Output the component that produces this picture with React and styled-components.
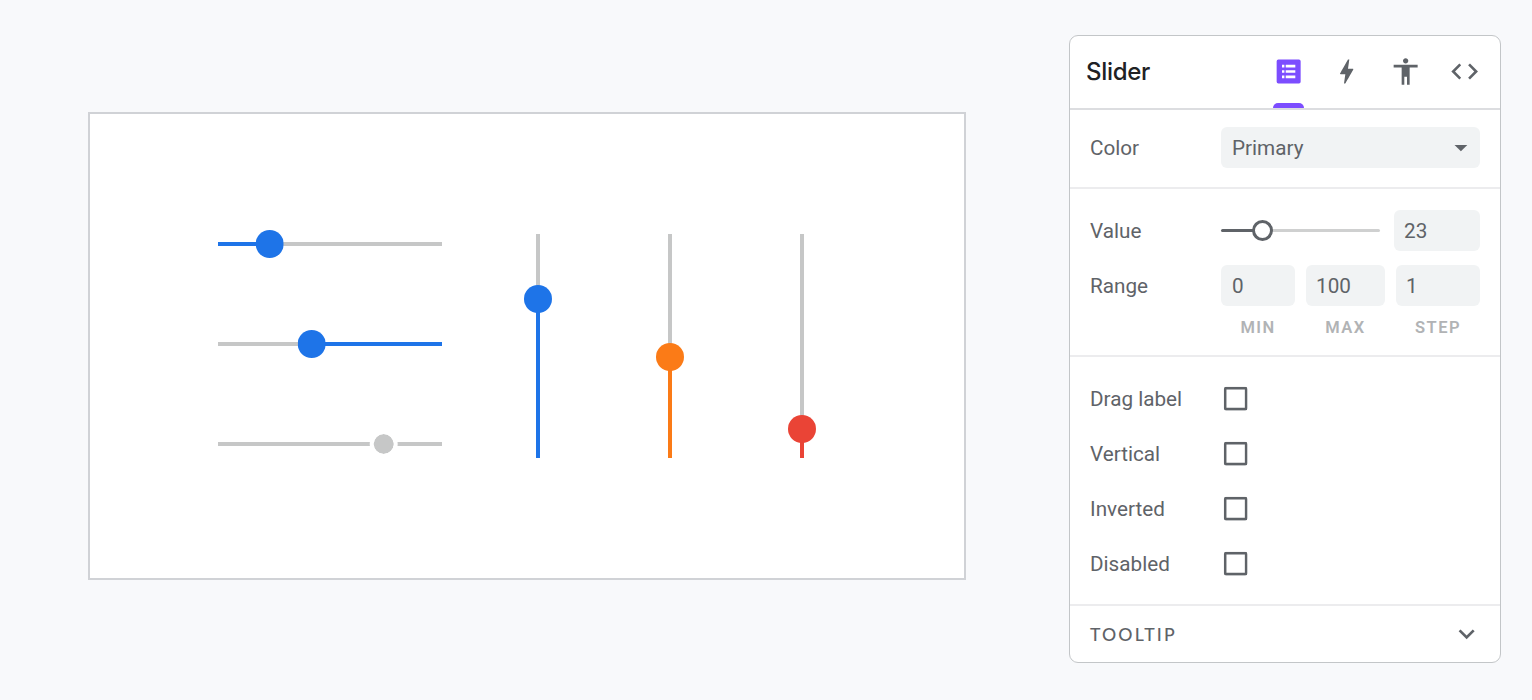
import React from "react";
import styled, { createGlobalStyle } from "styled-components";

const GlobalStyle = createGlobalStyle`
  *, *::before, *::after { box-sizing: border-box; }
  body { margin: 0; background: #f8f9fb; }
`;

const Page = styled.main`
  display: flex;
  justify-content: space-between;
  align-items: flex-start;
  width: 1532px;
  height: 700px;
  padding: 35px 31px 0 88px;
  overflow: hidden;
  background: #f8f9fb;
  color: #5f6368;
  font-family: Roboto, "Liberation Sans", sans-serif;
`;

const Stage = styled.section`
  display: flex;
  gap: 82px;
  width: 878px;
  height: 468px;
  margin-top: 77px;
  padding: 120px 0 0 128px;
  border: 2px solid #d0d2d6;
  background: #fff;
`;

const HorizontalGroup = styled.div`
  display: flex;
  flex-direction: column;
  gap: 72px;
  margin-top: -4px;
`;

const VerticalGroup = styled.div`
  display: flex;
  gap: 104px;
`;

const Slider = styled.div`
  display: flex;
  flex-direction: ${(p) => (p.$vertical ? "column-reverse" : "row")};
  align-items: center;
  width: ${(p) => (p.$vertical ? "28px" : "224px")};
  height: ${(p) => (p.$vertical ? "224px" : "28px")};
`;

const Segment = styled.span`
  flex: ${(p) => p.$size} 1 0;
  ${(p) => (p.$vertical ? "width" : "height")}: 4px;
  background: ${(p) => p.$color};
`;

const Thumb = styled.span`
  flex: none;
  z-index: 1;
  width: 28px;
  height: 28px;
  margin: ${(p) => (p.$vertical ? "-14px 0" : "0 -14px")};
  border: ${(p) => (p.$disabled ? "4px solid #fff" : "0")};
  border-radius: 50%;
  background: ${(p) => p.$color};
  background-clip: padding-box;
  transform: ${(p) => (p.$vertical ? "none" : "translateX(-0.3px)")};
`;

const Panel = styled.aside`
  width: 432px;
  height: 628px;
  overflow: hidden;
  border: 1px solid #c3c6c8;
  border-radius: 9px;
  background: #fff;
`;

const Header = styled.header`
  display: flex;
  justify-content: space-between;
  height: 74px;
  padding: 0 6px 0 16px;
  border-bottom: 2px solid #dcdde0;
`;

const Title = styled.h1`
  margin: 0;
  font: 500 24px/72px Inter, Roboto, sans-serif;
  letter-spacing: -0.3px;
  color: #202124;
`;

const Tabs = styled.nav`
  display: flex;
`;

const Tab = styled.button`
  display: flex;
  flex-direction: column;
  align-items: center;
  width: 58.67px;
  height: 72px;
  padding: 20px 0 0;
  border: 0;
  background: none;
  color: ${(p) => (p.$active ? "#7c4dff" : "#5f6368")};
`;

const Indicator = styled.span`
  width: 31px;
  height: 5px;
  margin-top: 15px;
  border-radius: 5px 5px 0 0;
  background: #7c4dff;
`;

const Icon = styled.svg`
  display: block;
  flex: none;
  width: 32px;
  height: 32px;
  fill: currentColor;
  transform: translate(-0.35px, -0.5px);
`;

const Section = styled.div`
  display: flex;
  flex-direction: column;
  height: ${(p) => p.$height}px;
  padding: ${(p) => p.$top}px 20px 0;
  border-bottom: 2px solid #ececee;
`;

const Row = styled.div`
  display: flex;
  align-items: center;
  height: 41px;
  margin-bottom: ${(p) => p.$after || 0}px;
`;

const Label = styled.span`
  flex: none;
  width: 131px;
  font-size: 20.7px;
  line-height: 28px;
`;

const Field = styled.div`
  display: flex;
  align-items: center;
  justify-content: space-between;
  width: ${(p) => p.$width}px;
  height: 41px;
  margin-left: ${(p) => p.$gap || 0}px;
  padding: 0 3px 0 ${(p) => p.$inset || 11}px;
  border-radius: 6px;
  background: #f1f3f4;
  font-size: 20.7px;
  line-height: 28px;
`;

const MiniSlider = styled.div`
  display: flex;
  align-items: center;
  width: 159px;
`;

const MiniTrack = styled.span`
  flex: ${(p) => p.$size} 1 0;
  height: 3px;
  border-radius: 2px;
  background: ${(p) => (p.$filled ? "#5f6368" : "#cfd0d0")};
`;

const MiniThumb = styled.span`
  flex: none;
  width: 21px;
  height: 21px;
  margin: 0 -10.5px;
  z-index: 1;
  border: 3px solid #5f6368;
  border-radius: 50%;
  background: #fff;
`;

const Captions = styled.div`
  display: flex;
  margin-left: 131px;
  padding-top: 10px;
`;

const Caption = styled.span`
  width: ${(p) => p.$width}px;
  margin-left: ${(p) => p.$gap || 0}px;
  text-align: center;
  font-size: 16.5px;
  font-weight: 600;
  line-height: 23px;
  letter-spacing: 1.45px;
  color: #b1b3b5;
`;

const Box = styled.svg`
  width: 24px;
  height: 24px;
  margin-left: 3px;
  fill: none;
  stroke: #5f6368;
  stroke-width: 2.6;
  transform: translate(-0.35px, -0.35px);
`;

const Footer = styled.footer`
  display: flex;
  align-items: center;
  justify-content: space-between;
  height: 57px;
  padding: 0 17px 0 20px;
`;

const FooterTitle = styled.span`
  font: 500 17.7px/24px Lato, sans-serif;
  letter-spacing: 2.1px;
`;

function DemoSlider({ value, color, vertical, inverted, disabled }) {
  const grey = "#c6c7c7";
  return (
    <Slider $vertical={vertical}>
      <Segment $vertical={vertical} $size={value} $color={inverted ? grey : color} />
      <Thumb $vertical={vertical} $disabled={disabled} $color={color} />
      <Segment $vertical={vertical} $size={100 - value} $color={inverted ? color : grey} />
    </Slider>
  );
}

const tabIcons = [
  "M4.3 3h15.4a1.3 1.3 0 0 1 1.3 1.3v15.4a1.3 1.3 0 0 1-1.3 1.3H4.3a1.3 1.3 0 0 1-1.3-1.3V4.3A1.3 1.3 0 0 1 4.3 3zM7 7v2h1.8V7zm2.8 0v2H17V7zM7 11v2h1.8v-2zm2.8 0v2H17v-2zM7 15v2h1.8v-2zm2.8 0v2H17v-2z",
  "M11 21h-1l1-7H7.5c-.58 0-.57-.32-.38-.66.19-.34.05-.08.07-.12C8.48 10.94 10.42 7.54 13 3h1l-1 7h3.5c.49 0 .56.33.47.51l-.07.15C12.96 17.55 11 21 11 21z",
  "M12 2c1.1 0 2 .9 2 2s-.9 2-2 2-2-.9-2-2 .9-2 2-2zm9 7h-6v13h-2v-6h-2v6H9V9H3V7h18v2z",
  "M9.4 16.6L4.8 12l4.6-4.6L8 6l-6 6 6 6 1.4-1.4zm5.2 0l4.6-4.6-4.6-4.6L16 6l6 6-6 6-1.4-1.4z",
];

const options = ["Drag label", "Vertical", "Inverted", "Disabled"];

export default function App() {
  return (
    <Page>
      <GlobalStyle />
      <Stage>
        <HorizontalGroup>
          <DemoSlider value={23} color="#1e74e8" />
          <DemoSlider value={42} color="#1e74e8" inverted />
          <DemoSlider value={74} color="#c6c7c7" disabled />
        </HorizontalGroup>
        <VerticalGroup>
          <DemoSlider vertical value={71} color="#1e74e8" />
          <DemoSlider vertical value={45} color="#fb7b17" />
          <DemoSlider vertical value={13} color="#ea4436" />
        </VerticalGroup>
      </Stage>
      <Panel>
        <Header>
          <Title>Slider</Title>
          <Tabs>
            {tabIcons.map((d, i) => (
              <Tab key={d} $active={i === 0}>
                <Icon viewBox="0 0 24 24">
                  <path d={d} fillRule={i === 0 ? "evenodd" : undefined} />
                </Icon>
                {i === 0 && <Indicator />}
              </Tab>
            ))}
          </Tabs>
        </Header>
        <Section $height={79} $top={17}>
          <Row>
            <Label>Color</Label>
            <Field $width={259}>
              Primary
              <Icon viewBox="0 0 24 24">
                <path d="M7.4 10.1l4.8 4.8 4.8-4.8z" />
              </Icon>
            </Field>
          </Row>
        </Section>
        <Section $height={168} $top={21}>
          <Row $after={14}>
            <Label>Value</Label>
            <MiniSlider>
              <MiniTrack $size={26} $filled />
              <MiniThumb />
              <MiniTrack $size={74} />
            </MiniSlider>
            <Field $width={86} $gap={14} $inset={10}>23</Field>
          </Row>
          <Row>
            <Label>Range</Label>
            <Field $width={74}>0</Field>
            <Field $width={79} $gap={11} $inset={10}>100</Field>
            <Field $width={84} $gap={11} $inset={10}>1</Field>
          </Row>
          <Captions>
            <Caption $width={74}>MIN</Caption>
            <Caption $width={79} $gap={11}>MAX</Caption>
            <Caption $width={84} $gap={11}>STEP</Caption>
          </Captions>
        </Section>
        <Section $height={249} $top={21}>
          {options.map((name) => (
            <Row key={name} $after={14.33}>
              <Label>{name}</Label>
              <Box viewBox="0 0 24 24">
                <rect x="1.5" y="1.5" width="21" height="21" rx="1" />
              </Box>
            </Row>
          ))}
        </Section>
        <Footer>
          <FooterTitle>TOOLTIP</FooterTitle>
          <Icon viewBox="0 0 24 24">
            <path d="M16.59 8.19L12 12.77 7.41 8.19 6 9.6l6 6 6-6z" />
          </Icon>
        </Footer>
      </Panel>
    </Page>
  );
}
